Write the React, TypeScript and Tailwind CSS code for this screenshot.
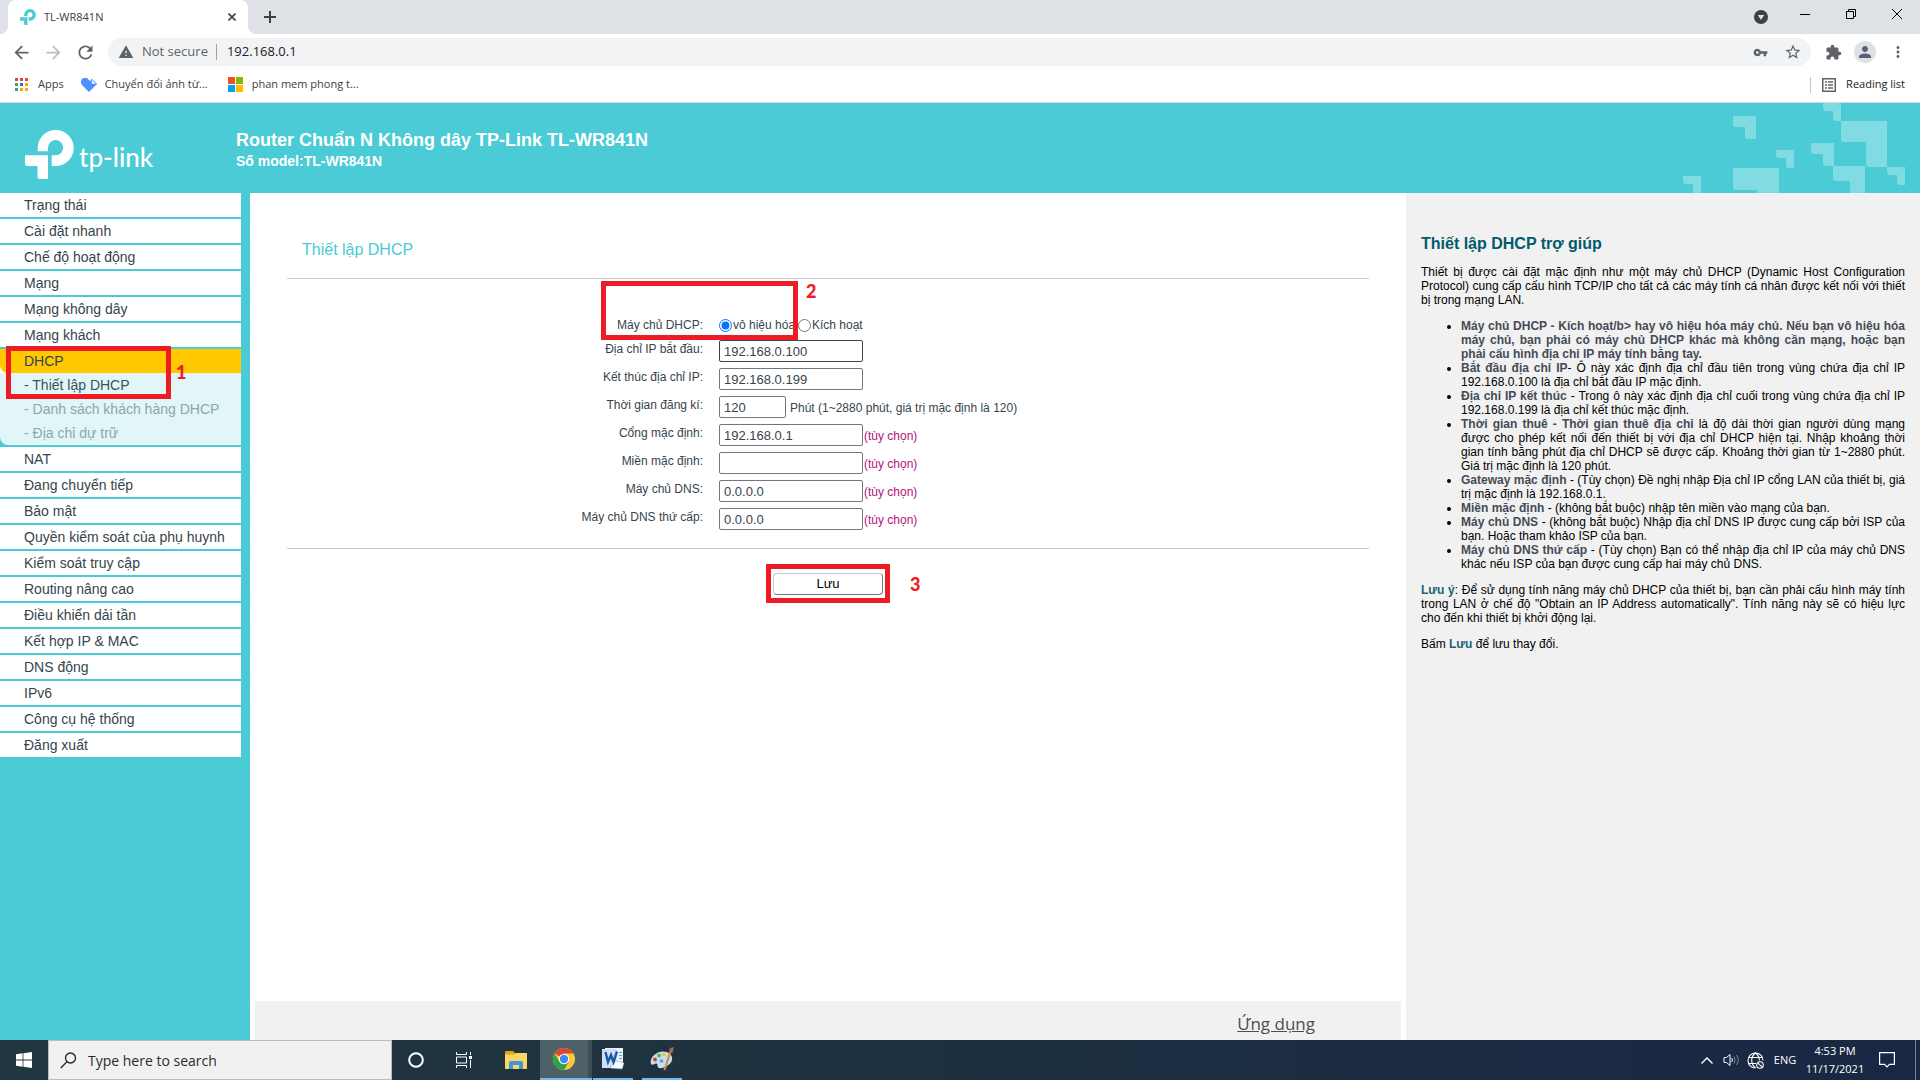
import { useState } from "react";
import type { ReactNode } from "react";
import {
  MdArrowBack,
  MdArrowForward,
  MdExtension,
  MdMoreVert,
  MdPerson,
  MdRefresh,
  MdStarBorder,
  MdVpnKey,
  MdWarning,
} from "react-icons/md";

const menuTop = [
  "Trạng thái",
  "Cài đặt nhanh",
  "Chế độ hoạt động",
  "Mạng",
  "Mạng không dây",
  "Mạng khách",
];

const menuBottom = [
  "NAT",
  "Đang chuyển tiếp",
  "Bảo mật",
  "Quyền kiểm soát của phụ huynh",
  "Kiểm soát truy cập",
  "Routing nâng cao",
  "Điều khiển dải tần",
  "Kết hợp IP & MAC",
  "DNS động",
  "IPv6",
  "Công cụ hệ thống",
  "Đăng xuất",
];

const fields = [
  { id: "start", label: "Địa chỉ IP bắt đầu:", value: "192.168.0.100", active: true },
  { id: "end", label: "Kết thúc địa chỉ IP:", value: "192.168.0.199" },
  {
    id: "lease",
    label: "Thời gian đăng kí:",
    value: "120",
    note: "Phút (1~2880 phút, giá trị mặc định là 120)",
  },
  { id: "gateway", label: "Cổng mặc định:", value: "192.168.0.1", optional: true },
  { id: "domain", label: "Miền mặc định:", value: "", optional: true },
  { id: "dns1", label: "Máy chủ DNS:", value: "0.0.0.0", optional: true },
  { id: "dns2", label: "Máy chủ DNS thứ cấp:", value: "0.0.0.0", optional: true },
];

const helpItems = [
  {
    term: "Máy chủ DHCP - Kích hoạt/b> hay vô hiệu hóa máy chủ. Nếu bạn vô hiệu hóa máy chủ, bạn phải có máy chủ DHCP khác mà không cần mạng, hoặc bạn phải cấu hình địa chỉ IP máy tính bằng tay.",
    text: "",
  },
  {
    term: "Bắt đầu địa chỉ IP",
    text: "- Ô này xác định địa chỉ đầu tiên trong vùng chứa địa chỉ IP 192.168.0.100 là địa chỉ bắt đầu IP mặc định.",
  },
  {
    term: "Địa chỉ IP kết thúc",
    text: " - Trong ô này xác định địa chỉ cuối trong vùng chứa địa chỉ IP 192.168.0.199 là địa chỉ kết thúc mặc định.",
  },
  {
    term: "Thời gian thuê - Thời gian thuê địa chỉ",
    text: " là độ dài thời gian người dùng mạng được cho phép kết nối đến thiết bị với địa chỉ DHCP hiện tại. Nhập khoảng thời gian tính bằng phút địa chỉ DHCP sẽ được cấp. Khoảng thời gian từ 1~2880 phút. Giá trị mặc định là 120 phút.",
  },
  {
    term: "Gateway mặc định",
    text: " - (Tùy chọn) Đề nghị nhập Địa chỉ IP cổng LAN của thiết bị, giá trị mặc định là 192.168.0.1.",
  },
  {
    term: "Miền mặc định",
    text: " - (không bắt buộc) nhập tên miền vào mạng của bạn.",
  },
  {
    term: "Máy chủ DNS",
    text: " - (không bắt buộc) Nhập địa chỉ DNS IP được cung cấp bởi ISP của bạn. Hoặc tham khảo ISP của bạn.",
  },
  {
    term: "Máy chủ DNS thứ cấp",
    text: " - (Tùy chọn) Bạn có thể nhập địa chỉ IP của máy chủ DNS khác nếu ISP của bạn được cung cấp hai máy chủ DNS.",
  },
];

// x, y, size, thickness of each corner block in the banner
const blocks = [
  [3, 73, 18, 8],
  [53, 13, 23, 11],
  [53, 65, 46, 22],
  [96, 47, 18, 8],
  [131, 40, 23, 11],
  [143, 0, 18, 8],
  [153, 63, 32, 15],
  [161, 18, 46, 21],
  [207, 64, 18, 8],
];

function TpMark({ className }: { className: string }) {
  return (
    <svg viewBox="0 0 49 49" className={className} fill="currentColor" aria-hidden="true">
      <path d="M12.7 21.3V18A18 18 0 1 1 30.7 36H26.7V25.3H30.7A7.6 7.6 0 1 0 23 18V21.3Z" />
      <path d="M0 25.3H23V49H15a2.5 2.5 0 0 1-2.5-2.5V36H2.5A2.5 2.5 0 0 1 0 33.5Z" />
    </svg>
  );
}

function Marker({ children, className }: { children: ReactNode; className: string }) {
  return (
    <span
      className={`absolute font-['Lato',sans-serif] text-[18px] leading-5 font-black text-[#ed1c24] ${className}`}
    >
      {children}
    </span>
  );
}

function BrowserChrome() {
  return (
    <div className="font-['Open_Sans',sans-serif] text-[#3c4043]">
      {/* Tab strip */}
      <div className="flex h-[34px] items-start bg-[#dee1e6]">
        <div className="flex h-[34px] w-2 items-end bg-white">
          <div className="h-full w-full rounded-br-lg bg-[#dee1e6]" />
        </div>
        <div className="flex h-full w-60 items-center rounded-t-lg bg-white pr-2 pl-3">
          <TpMark className="h-4 w-4 text-[#4acbd6]" />
          <span className="ml-2 flex-1 text-[11px]">TL-WR841N</span>
          <button aria-label="Close tab" className="flex h-4 w-4 items-center justify-center">
            <svg viewBox="0 0 8 8" className="h-2 w-2" stroke="currentColor" strokeWidth="1.6">
              <path d="M0.5 0.5L7.5 7.5M7.5 0.5L0.5 7.5" />
            </svg>
          </button>
        </div>
        <div className="h-full w-2 bg-white">
          <div className="h-full w-full rounded-bl-lg bg-[#dee1e6]" />
        </div>
        <button aria-label="New tab" className="flex h-[34px] w-7 items-center justify-center">
          <svg viewBox="0 0 12 12" className="h-3 w-3" stroke="currentColor" strokeWidth="2">
            <path d="M6 0V12M0 6H12" />
          </svg>
        </button>
        <div className="flex-1" />
        <button aria-label="Search tabs" className="flex h-[34px] w-[42px] items-center justify-center">
          <svg viewBox="0 0 14 14" className="h-[14px] w-[14px]">
            <circle cx="7" cy="7" r="7" fill="#3c4043" />
            <path d="M3.8 5H10.2L7 10Z" fill="#dee1e6" />
          </svg>
        </button>
        <button aria-label="Minimize" className="flex h-7 w-[46px] items-center justify-center text-black">
          <svg viewBox="0 0 10 10" className="h-[10px] w-[10px]" stroke="currentColor">
            <path d="M0 5.5H10" />
          </svg>
        </button>
        <button aria-label="Restore" className="flex h-7 w-[46px] items-center justify-center text-black">
          <svg viewBox="0 0 10 10" className="h-[10px] w-[10px]" fill="none" stroke="currentColor">
            <path d="M0.5 2.5H7.5V9.5H0.5ZM2.5 2.5V0.5H9.5V7.5H7.5" />
          </svg>
        </button>
        <button aria-label="Close" className="flex h-7 w-[46px] items-center justify-center text-black">
          <svg viewBox="0 0 10 10" className="h-[10px] w-[10px]" stroke="currentColor">
            <path d="M0 0L10 10M10 0L0 10" />
          </svg>
        </button>
      </div>

      {/* Toolbar */}
      <div className="flex h-9 items-center bg-white pl-[5px] text-[#5f6368]">
        <button aria-label="Back" className="flex w-8 justify-center">
          <MdArrowBack size={21} />
        </button>
        <button aria-label="Forward" className="flex w-8 justify-center text-[#babcbe]">
          <MdArrowForward size={21} />
        </button>
        <button aria-label="Reload" className="flex w-8 justify-center">
          <MdRefresh size={21} />
        </button>
        <div className="ml-[7px] flex h-7 flex-1 items-center rounded-full bg-[#f1f3f4] pr-[9px] pl-[10px]">
          <MdWarning size={16} />
          <span className="ml-2 text-[13px]">Not secure</span>
          <span className="mr-[10px] ml-2 h-4 w-px bg-[#9aa0a6]" />
          <input
            aria-label="Address"
            defaultValue="192.168.0.1"
            className="min-w-0 flex-1 bg-transparent text-[13px] text-[#202124] outline-none"
          />
          <button aria-label="Passwords" className="mr-4">
            <MdVpnKey size={15} />
          </button>
          <button aria-label="Bookmark">
            <MdStarBorder size={18} />
          </button>
        </div>
        <button aria-label="Extensions" className="ml-[14px]">
          <MdExtension size={17} />
        </button>
        <button
          aria-label="Profile"
          className="ml-3 flex h-[22px] w-[22px] items-center justify-center rounded-full bg-[#dee1e6] text-[#55607a]"
        >
          <MdPerson size={18} />
        </button>
        <button aria-label="Menu" className="mx-[13px]">
          <MdMoreVert size={18} />
        </button>
      </div>

      {/* Bookmarks */}
      <nav className="flex h-[33px] items-center border-b border-[#d5d8dc] bg-white pr-[15px] pb-[3px] pl-[15px] text-[11px]">
        <a href="#apps" className="flex items-center gap-[10px]">
          <svg viewBox="0 0 13 13" className="h-[13px] w-[13px]">
            <path fill="#ea4335" d="M0 0h3v3H0zM5 0h3v3H5zM10 0h3v3h-3z" />
            <path fill="#34a853" d="M0 5h3v3H0zM0 10h3v3H0z" />
            <path fill="#1a73e8" d="M5 5h3v3H5z" />
            <path fill="#f9ab00" d="M10 5h3v3h-3zM5 10h3v3H5zM10 10h3v3h-3z" />
          </svg>
          Apps
        </a>
        <a href="#convert" className="ml-[17px] flex items-center gap-2">
          <svg viewBox="0 0 16 14" className="h-[14px] w-4">
            <path d="M8 14L1 7C-1 4 0 .5 3 0h3l3 3 2-2 5 5Z" fill="#4d90fe" />
            <path d="M10.5 1.2V6H15.5Z" fill="#fff" stroke="#4d90fe" strokeWidth=".7" />
          </svg>
          Chuyển đổi ảnh từ...
        </a>
        <a href="#software" className="ml-5 flex items-center gap-[9px]">
          <svg viewBox="0 0 15 15" className="h-[15px] w-[15px]">
            <path fill="#f25022" d="M0 0h7v7H0z" />
            <path fill="#7fba00" d="M8 0h7v7H8z" />
            <path fill="#00a4ef" d="M0 8h7v7H0z" />
            <path fill="#ffb900" d="M8 8h7v7H8z" />
          </svg>
          phan mem phong t...
        </a>
        <div className="flex-1" />
        <span className="mr-[11px] h-4 w-px bg-[#c4c7cb]" />
        <a href="#reading-list" className="flex items-center gap-[10px] text-[#202124]">
          <svg viewBox="0 0 14 14" className="h-[14px] w-[14px]" fill="none" stroke="#5f6368">
            <path d="M.75.75h12.5v12.5H.75z" strokeWidth="1.5" />
            <path d="M3 4h2M6 4h5M3 7h2M6 7h5M3 10h2M6 10h5" strokeWidth="1.5" />
          </svg>
          Reading list
        </a>
      </nav>
    </div>
  );
}

function Banner() {
  return (
    <header className="flex h-[90px] bg-[#4acbd6] text-white">
      <div className="flex w-[236px] shrink-0 pt-[27px] pl-[25px]">
        <TpMark className="h-[49px] w-[49px]" />
        <span className="ml-[5px] pt-[11px] font-['Lato',sans-serif] text-[26px] leading-8 font-medium">
          tp-link
        </span>
      </div>
      <div className="flex-1 pt-[26px] font-bold">
        <h1 className="text-[18px] leading-[22px]">Router Chuẩn N Không dây TP-Link TL-WR841N</h1>
        <p className="text-[14px] leading-5">Số model:TL-WR841N</p>
      </div>
      <svg viewBox="0 0 240 90" className="h-[90px] w-60 shrink-0" fill="#80dbe2" aria-hidden="true">
        {blocks.map(([x, y, s, t]) => (
          <path
            key={`${x}-${y}`}
            d={`M${x} ${y}h${s}v${s}h${3 - t}q-3 0 -3 -3v${t + 3 - s}h${t + 3 - s}q-3 0 -3 -3z`}
          />
        ))}
      </svg>
    </header>
  );
}

function MenuItem({ children }: { children: ReactNode }) {
  return (
    <li className="mb-0.5 bg-white">
      <a href="#menu" className="block pl-6">
        {children}
      </a>
    </li>
  );
}

function Sidebar() {
  return (
    <nav className="w-[250px] shrink-0 bg-[#4acbd6] pr-[9px] text-[14px] leading-6 text-[#36444c]">
      <ul>
        {menuTop.map((item) => (
          <MenuItem key={item}>{item}</MenuItem>
        ))}
        <li className="relative mb-0.5">
          <div className="bg-white">
            <a href="#dhcp" className="block rounded-bl-lg bg-[#ffc800] pl-6">
              DHCP
            </a>
          </div>
          <ul className="rounded-bl-lg bg-[#e2f6f8] text-[#8aa7ac]">
            <li>
              <a href="#dhcp-settings" className="block pl-6 text-[#36545c]">
                - Thiết lập DHCP
              </a>
            </li>
            <li>
              <a href="#dhcp-clients" className="block pl-6">
                - Danh sách khách hàng DHCP
              </a>
            </li>
            <li>
              <a href="#dhcp-reservation" className="block pl-6">
                - Địa chỉ dự trữ
              </a>
            </li>
          </ul>
          <div className="pointer-events-none absolute -top-[3px] left-[6px] h-[53px] w-[165px] border-5 border-[#ed1c24]" />
          <Marker className="top-[13px] left-[176px]">1</Marker>
        </li>
        {menuBottom.map((item) => (
          <MenuItem key={item}>{item}</MenuItem>
        ))}
      </ul>
    </nav>
  );
}

function DhcpForm() {
  const [mode, setMode] = useState("off");

  return (
    <form className="px-[37px] pt-[45px] text-[12px] text-[#36444c]">
      <h2 className="px-[15px] text-[16px] leading-6 text-[#4acbd6]">Thiết lập DHCP</h2>

      <div className="relative mt-4 flex flex-col gap-1.5 border-y border-[#c8c8c8] pt-[38px] pb-[18px]">
        <fieldset className="flex items-center gap-4 pb-[1px]">
          <span className="w-[416px] text-right leading-4">Máy chủ DHCP:</span>
          <div className="flex items-center">
            <input
              type="radio"
              id="mode-off"
              name="mode"
              checked={mode === "off"}
              onChange={() => setMode("off")}
              className="h-[13px] w-[13px]"
            />
            <label htmlFor="mode-off" className="w-[66px] pl-px leading-4">
              vô hiệu hóa
            </label>
            <input
              type="radio"
              id="mode-on"
              name="mode"
              checked={mode === "on"}
              onChange={() => setMode("on")}
              className="h-[13px] w-[13px]"
            />
            <label htmlFor="mode-on" className="pl-px leading-4">
              Kích hoạt
            </label>
          </div>
        </fieldset>

        {fields.map((f) => (
          <div key={f.id} className="flex gap-4">
            <label htmlFor={f.id} className="w-[416px] text-right leading-[18px]">
              {f.label}
            </label>
            <div className="flex items-center">
              <input
                id={f.id}
                defaultValue={f.value}
                className={`h-[22px] rounded-xs border bg-white px-1 text-[13px] ${
                  f.active ? "border-[#3f4448]" : "border-[#767676]"
                } ${f.note ? "w-[67px]" : "w-36"}`}
              />
              {f.note && <span className="pt-0.5 pl-1">{f.note}</span>}
              {f.optional && <span className="pt-0.5 pl-px text-[#b5127b]">(tùy chọn)</span>}
            </div>
          </div>
        ))}

        <div className="pointer-events-none absolute top-[2px] left-[314px] h-[59px] w-[197px] border-5 border-[#ed1c24]" />
        <Marker className="top-[2px] left-[519px]">2</Marker>
      </div>

      <div className="mt-[15px] flex justify-center">
        <div className="relative border-5 border-[#ed1c24] px-[2px] pt-1 pb-[3px]">
          <button
            type="button"
            className="block h-[22px] w-[110px] rounded border border-t-[#c8c8c8] border-r-[#767676] border-b-[#767676] border-l-[#c8c8c8] bg-white text-[13px] leading-5 text-black"
          >
            Lưu
          </button>
          <Marker className="top-[5px] left-[139px]">3</Marker>
        </div>
      </div>
    </form>
  );
}

function Help() {
  return (
    <aside className="w-[514px] shrink-0 bg-[#f1f1f1] px-[15px] pt-10 text-justify text-[12px] leading-[14px] text-black">
      <h3 className="pt-px text-[16px] leading-5 font-bold text-[#005b6b]">
        Thiết lập DHCP trợ giúp
      </h3>
      <p className="mt-[11px]">
        Thiết bị được cài đặt mặc định như một máy chủ DHCP (Dynamic Host Configuration Protocol)
        cung cấp cấu hình TCP/IP cho tất cả các máy tính cá nhân được kết nối với thiết bị trong
        mạng LAN.
      </p>
      <ul className="mt-3 list-disc pl-10">
        {helpItems.map((item) => (
          <li key={item.term}>
            <b className="text-[#444b55]">{item.term}</b>
            {item.text}
          </li>
        ))}
      </ul>
      <p className="mt-3">
        <b className="text-[#1c6377]">Lưu ý</b>: Để sử dụng tính năng máy chủ DHCP của thiết bị, bạn
        cần phải cấu hình máy tính trong LAN ở chế độ "Obtain an IP Address automatically". Tính
        năng này sẽ có hiệu lực cho đến khi thiết bị khởi động lại.
      </p>
      <p className="mt-3">
        Bấm <b className="text-[#1c6377]">Lưu</b> để lưu thay đổi.
      </p>
    </aside>
  );
}

function Taskbar() {
  return (
    <footer className="flex h-10 items-stretch bg-linear-to-r from-[#21373f] via-[#1d3040] to-[#1a2744] font-['Open_Sans',sans-serif] text-white">
      <button aria-label="Start" className="flex w-12 items-center justify-center">
        <svg viewBox="0 0 16 16" className="h-4 w-4" fill="currentColor">
          <path d="M0 2.2L6.6 1.3V7.6H0ZM7.4 1.2L16 0V7.6H7.4ZM0 8.4H6.6V14.7L0 13.8ZM7.4 8.4H16V16L7.4 14.8Z" />
        </svg>
      </button>
      <label className="flex w-[344px] items-center border border-[#bdbdbd] bg-[#f1f1f1] pl-[11px] text-[#2b2b2b]">
        <svg viewBox="0 0 17 17" className="h-[17px] w-[17px]" fill="none" stroke="#1f1f1f" strokeWidth="1.3">
          <circle cx="10.5" cy="6" r="5" />
          <path d="M7 9.6L.8 16" />
        </svg>
        <input
          aria-label="Search"
          placeholder="Type here to search"
          className="ml-[11px] flex-1 bg-transparent text-[14px] outline-none placeholder:text-[#2b2b2b]"
        />
      </label>
      <button aria-label="Cortana" className="flex w-12 items-center justify-center">
        <svg viewBox="0 0 16 16" className="h-4 w-4" fill="none" stroke="currentColor" strokeWidth="2">
          <circle cx="8" cy="8" r="6.8" />
        </svg>
      </button>
      <button aria-label="Task view" className="flex w-12 items-center justify-center">
        <svg viewBox="0 0 16 16" className="h-4 w-4" fill="none" stroke="currentColor">
          <path d="M.5 0V2.5H10.5V0M.5 16V13.5H10.5V16M.5 5H10.5V11H.5ZM14.5 0V3M14.5 8V16" />
          <path d="M13 4H16V7H13Z" fill="currentColor" stroke="none" />
        </svg>
      </button>
      <button aria-label="File Explorer" className="ml-1 flex w-12 items-center justify-center">
        <svg viewBox="0 0 22 18" className="h-[18px] w-[22px]">
          <path d="M0 1a1 1 0 0 1 1-1h7l2 2h11a1 1 0 0 1 1 1v14a1 1 0 0 1-1 1H0Z" fill="#e6a50e" />
          <path d="M0 3.5H9l2-1.5h11V17a1 1 0 0 1-1 1H1a1 1 0 0 1-1-1Z" fill="#fbd465" />
          <path d="M4 18v-6a2 2 0 0 1 2-2h10a2 2 0 0 1 2 2v6h-4v-4H8v4Z" fill="#3e97dc" />
        </svg>
      </button>
      <button
        aria-label="Google Chrome"
        className="flex w-12 items-center justify-center border-b-2 border-[#76b9ed] bg-[#4f6168]"
      >
        <svg viewBox="0 0 22 22" className="h-[22px] w-[22px]">
          <circle cx="11" cy="11" r="11" fill="#fcc934" />
          <path d="M11 11L1.5 5.5A11 11 0 0 1 20.5 5.5H11Z" fill="#dc4437" />
          <path d="M1.5 5.5A11 11 0 0 0 11 22L15.8 13.7 6.3 13.7Z" fill="#2ca14b" />
          <circle cx="11" cy="11" r="5.2" fill="#fff" />
          <circle cx="11" cy="11" r="4.2" fill="#4285f4" />
        </svg>
      </button>
      <div className="w-1 border-b-2 border-[#76b9ed] bg-[#3c4d55]" />
      <button aria-label="Word" className="ml-px flex w-10 items-center justify-center border-b-2 border-[#76b9ed]">
        <svg viewBox="0 0 22 22" className="h-[22px] w-[22px]">
          <path d="M3 0H21V20H3Z" fill="#eaf1fb" />
          <path d="M0 1H15V20H0Z" fill="#cfe0f5" />
          <path d="M17 4h3v1h-3zM17 7h3v1h-3zM17 10h3v1h-3z" fill="#6f97d0" />
          <path d="M14 13L22 15 20 21 8 20Z" fill="#fff" stroke="#8aa9d6" strokeWidth=".6" />
          <path d="M3.500 4L6 14 9 7 11.500 14 15 3.500" fill="none" stroke="#1b56a6" strokeWidth="2.400" />
        </svg>
      </button>
      <button aria-label="Paint" className="ml-[9px] flex w-10 items-center justify-center border-b-2 border-[#76b9ed]">
        <svg viewBox="0 0 24 24" className="h-6 w-6">
          <path
            d="M1 17C-1 11 6 4.500 13 4.500 19 4.500 23 8.500 22 13 21 18 13 22 9 21 6.500 20 8.500 17.500 6.500 16.500 4.500 16 2.500 19 1 17Z"
            fill="#c5dff0"
          />
          <circle cx="5" cy="12.500" r="2" fill="#d93a2b" />
          <circle cx="9" cy="8.500" r="2" fill="#59b947" />
          <circle cx="14" cy="7.500" r="1.800" fill="#f3c02e" />
          <circle cx="11.500" cy="14" r="1.800" fill="#4d9fd8" />
          <path d="M14.500 23L20 6" stroke="#d98a3b" strokeWidth="2.200" />
          <path d="M18.500 6L20 1 24 0 22.500 6Z" fill="#a4694a" />
        </svg>
      </button>

      <div className="flex-1" />

      <button aria-label="Show hidden icons" className="flex w-6 items-center justify-center">
        <svg viewBox="0 0 12 7" className="h-[7px] w-3" fill="none" stroke="currentColor" strokeWidth="1.4">
          <path d="M.5 6.500L6 1L11.500 6.500" />
        </svg>
      </button>
      <button aria-label="Volume" className="flex w-6 items-center justify-center">
        <svg viewBox="0 0 17 14" className="h-[14px] w-[17px]" fill="none" stroke="currentColor">
          <path d="M1 4.500H3.500L7 1.500V12.500L3.500 9.500H1Z" />
          <path d="M8.800 5Q10 7 8.800 9" />
          <path d="M11 3.500Q13.200 7 11 10.500M13.500 2Q17 7 13.500 12" opacity=".45" />
        </svg>
      </button>
      <button aria-label="Network" className="flex w-6 items-center justify-center">
        <svg viewBox="0 0 17 17" className="h-[17px] w-[17px]" fill="none" stroke="currentColor" strokeWidth="1.1">
          <path d="M8.500 16A7.500 7.500 0 1 1 16 8.500M8.500 1Q4.500 4 4.700 8.500T8.500 16M8.500 1Q12.500 4 12.300 8.500M1.800 5.500H15.200M1.800 11.500H9" />
          <circle cx="13" cy="13" r="3.300" />
          <path d="M10.800 10.800L15.200 15.200" />
        </svg>
      </button>
      <button className="w-9 text-[11px]">ENG</button>
      <button className="w-16 text-[11px] leading-[18px]">
        4:53 PM
        <br />
        11/17/2021
      </button>
      <button aria-label="Notifications" className="flex w-10 items-center justify-center">
        <svg viewBox="0 0 16 16" className="h-4 w-4" fill="none" stroke="currentColor" strokeWidth="1.2">
          <path d="M.6 .6H15.400V12.400H10.500L8 15L5.500 12.400H.6Z" />
        </svg>
      </button>
      <div className="ml-2 w-[5px] border-l border-[#7b8494]" />
    </footer>
  );
}

export default function App() {
  return (
    <div className="flex min-h-screen flex-col bg-white font-['Liberation_Sans',Arial,sans-serif]">
      <BrowserChrome />
      <Banner />
      <div className="flex flex-1">
        <Sidebar />
        <main className="flex min-w-0 flex-1 flex-col justify-between bg-white">
          <DhcpForm />
          <div className="mx-[5px] flex h-[39px] items-center justify-end bg-[#f1f1f1] pt-1.5 pr-[86px]">
            <a
              href="#app"
              className="font-['Open_Sans',sans-serif] text-[17px] leading-6 text-[#4a4f55] underline"
            >
              Ứng dụng
            </a>
          </div>
        </main>
        <Help />
      </div>
      <Taskbar />
    </div>
  );
}
